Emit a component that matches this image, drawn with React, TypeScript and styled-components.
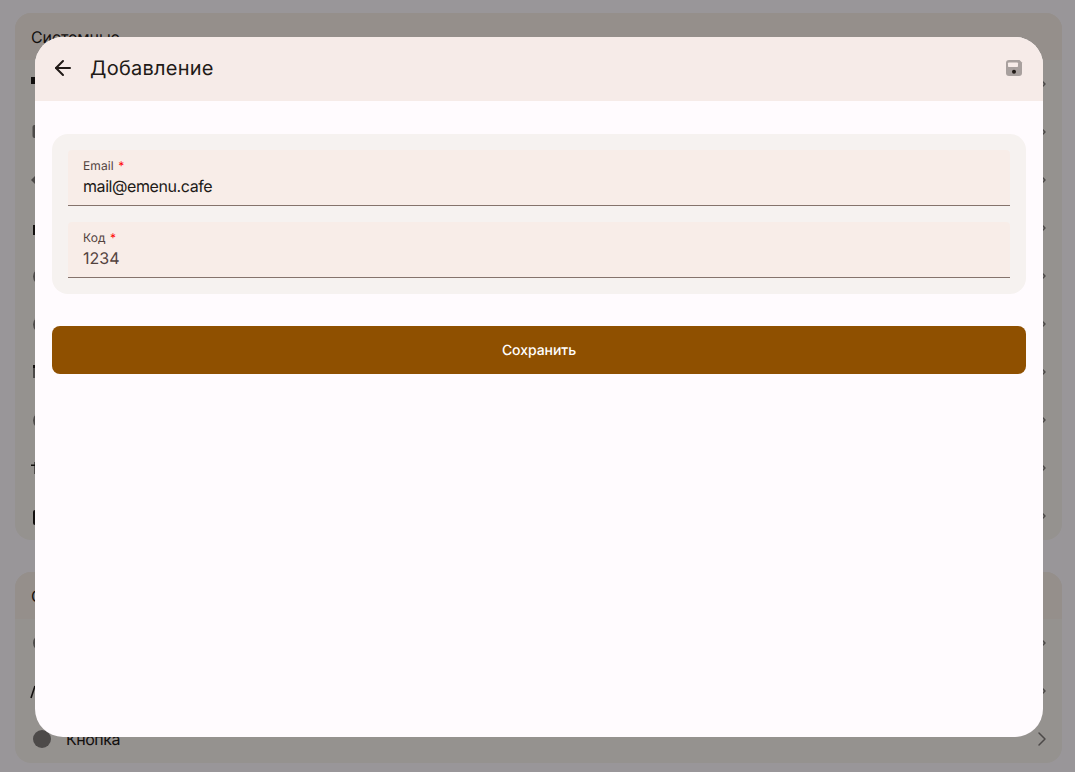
import React from "react";
import styled, { createGlobalStyle } from "styled-components";
import { ArrowLeft, ChevronRight } from "lucide-react";

const Global = createGlobalStyle`
  html, body { margin: 0; padding: 0; height: 100%; overflow: hidden; background: #fffbff; }
  body { font-family: Inter, "Noto Sans", sans-serif; text-rendering: geometricPrecision; }
  * { box-sizing: border-box; }
`;

const Page = styled.div`
  height: 772px;
  padding: 13px 13px 0 15px;
  display: flex;
  flex-direction: column;
  gap: 32px;
  overflow: hidden;
`;

const Card = styled.section`
  background: #f9f3ef;
  border-radius: 16px;
  overflow: hidden;
`;

const CardHeader = styled.div`
  height: 47px;
  padding: 14px 16px 0;
  background: #f8eee8;
  font-size: 16px;
  line-height: 20px;
  letter-spacing: -0.1px;
  color: #1f1a18;
`;

const Row = styled.div`
  height: 48px;
  padding: 0 8px 0 15px;
  display: flex;
  align-items: center;
  gap: 12px;
  font-size: 16px;
  letter-spacing: -0.5px;
  color: #1f1a18;
`;

const RowLabel = styled.span`
  flex: 1;
`;

const Overlay = styled.div`
  position: fixed;
  inset: 0;
  background: rgba(0, 0, 0, 0.4);
  padding: 37px 0 0 35px;
`;

const Dialog = styled.div`
  width: 1008px;
  height: 700px;
  background: #fffbfe;
  border-radius: 28px;
  overflow: hidden;
`;

const Bar = styled.header`
  height: 64px;
  background: #f6ebe8;
  display: flex;
  align-items: center;
  padding: 0 17px 2px 16px;
`;

const BackButton = styled.span`
  display: flex;
  color: #211a17;
  margin-right: 15px;
`;

const Title = styled.h1`
  flex: 1;
  margin: 0;
  font-size: 20px;
  font-weight: 400;
  line-height: 28px;
  letter-spacing: 0.25px;
  color: #211a17;
`;

const Body = styled.div`
  padding: 33px 17px;
  display: flex;
  flex-direction: column;
  gap: 32px;
`;

const Group = styled.div`
  background: #f6f2f0;
  border-radius: 16px;
  padding: 16px;
  display: flex;
  flex-direction: column;
  gap: 16px;
`;

const Field = styled.div`
  height: 56px;
  background: #f8ede8;
  border-bottom: 1px solid #85736c;
  border-radius: 4px 4px 0 0;
  padding: 8px 15px 0;
`;

const Label = styled.div`
  font-size: 12px;
  line-height: 16px;
  letter-spacing: 0.1px;
  color: #53433e;
`;

const Star = styled.span`
  color: #f00;
  margin-left: 1px;
`;

const Value = styled.div<{ $hint?: boolean }>`
  font-size: 16px;
  line-height: 24px;
  letter-spacing: ${(p) => (p.$hint ? "0" : "-0.42px")};
  color: ${(p) => (p.$hint ? "#53433e" : "#211a17")};
`;

const Submit = styled.button`
  height: 48px;
  border: 0;
  border-radius: 8px;
  padding: 2px 0 0;
  background: #8f5000;
  color: #fff;
  font: 500 14px/20px Inter, sans-serif;
  letter-spacing: -0.05px;
  text-rendering: geometricPrecision;
`;

const LeadSvg = styled.svg`
  flex: none;
  width: 24px;
  height: 24px;
`;

const GREY = "#807c7a";
const DARK = "#1f1a18";

const shapes: Record<string, React.ReactNode> = {
  block: <rect x="1" y="5" width="9" height="7" fill={DARK} />,
  panel: <rect x="2.5" y="5" width="19" height="13" rx="2" fill={GREY} />,
  tag: <path d="M1 12 8 5v14z" fill={GREY} />,
  bag: <rect x="3" y="9" width="18" height="10" fill={DARK} />,
  ring: <circle cx="12" cy="12.5" r="9" fill={GREY} />,
  arrow: (
    <>
      <rect x="3" y="5" width="18" height="13" fill={GREY} />
      <rect x="3" y="5" width="3" height="3" fill={DARK} />
    </>
  ),
  plus: (
    <>
      <rect x="4" y="6" width="2" height="12" fill={GREY} />
      <rect x="1" y="8.5" width="4" height="1.5" fill={DARK} />
    </>
  ),
  card: <rect x="3" y="6" width="18" height="15" rx="2" fill={DARK} />,
  dot: <circle cx="12" cy="12" r="9" fill={GREY} />,
  letter: <path d="M1 19 5 7" stroke={DARK} strokeWidth="1.6" fill="none" />,
};

const LeadIcon = ({ kind }: { kind: string }) => (
  <LeadSvg viewBox="0 0 24 24">{shapes[kind]}</LeadSvg>
);

const Chevron = () => <ChevronRight size={24} color="#7f7a78" strokeWidth={1.5} />;

const SaveIcon = () => (
  <svg width="24" height="24" viewBox="0 0 24 24">
    <path
      fill="#a8a09e"
      d="M7 4h10.5L20 6.5V17a3 3 0 0 1-3 3H7a3 3 0 0 1-3-3V7a3 3 0 0 1 3-3z"
    />
    <rect x="6" y="6.5" width="10" height="4.5" rx="0.8" fill="#f6ebe8" />
    <circle cx="12" cy="15.7" r="2" fill="#211a17" />
  </svg>
);

const topRows = ["block", "panel", "tag", "bag", "ring", "ring", "arrow", "ring", "plus", "card"];
const bottomRows: [string, string][] = [
  ["dot", ""],
  ["letter", ""],
  ["dot", "Кнопка"],
];

export default function App() {
  return (
    <>
      <Global />
      <Page>
        <Card>
          <CardHeader>Системные</CardHeader>
          {topRows.map((k, i) => (
            <Row key={i}>
              <LeadIcon kind={k} />
              <RowLabel />
              <Chevron />
            </Row>
          ))}
        </Card>
        <Card>
          <CardHeader>С</CardHeader>
          {bottomRows.map(([k, t], i) => (
            <Row key={i}>
              <LeadIcon kind={k} />
              <RowLabel>{t}</RowLabel>
              <Chevron />
            </Row>
          ))}
        </Card>
      </Page>
      <Overlay>
        <Dialog>
          <Bar>
            <BackButton>
              <ArrowLeft size={24} strokeWidth={2} />
            </BackButton>
            <Title>Добавление</Title>
            <SaveIcon />
          </Bar>
          <Body>
            <Group>
              <Field>
                <Label>
                  Email <Star>*</Star>
                </Label>
                <Value>mail@emenu.cafe</Value>
              </Field>
              <Field>
                <Label>
                  Код <Star>*</Star>
                </Label>
                <Value $hint>1234</Value>
              </Field>
            </Group>
            <Submit>Сохранить</Submit>
          </Body>
        </Dialog>
      </Overlay>
    </>
  );
}
